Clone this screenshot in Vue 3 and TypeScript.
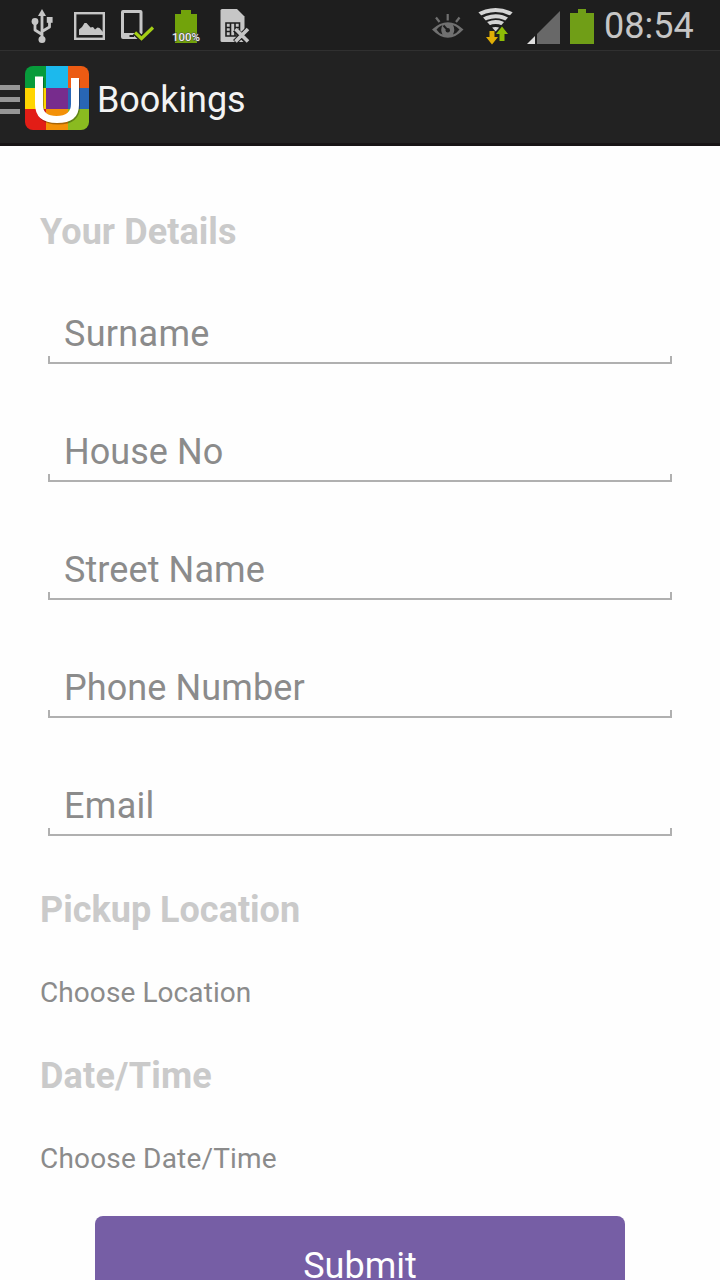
<script setup lang="ts">
interface Field {
  label: string
  spacing: string
}

const fields: Field[] = [
  { label: 'Surname', spacing: '0.3px' },
  { label: 'House No', spacing: '0.05px' },
  { label: 'Street Name', spacing: '0.1px' },
  { label: 'Phone Number', spacing: '0.1px' },
  { label: 'Email', spacing: '0.3px' },
]
</script>

<template>
  <div class="screen">
    <header class="status">
      <svg width="64" height="50" viewBox="0 0 64 50">
        <g fill="none" stroke="#c6c6c6" stroke-width="2.800" stroke-linejoin="round">
          <path d="M42 14V40M42 34.500L35 30V22M42 31.500L49.500 27V20" />
        </g>
        <g fill="#c6c6c6">
          <path d="M42 9l4 7h-8z" />
          <circle cx="35" cy="21.500" r="3.400" />
          <rect x="46.800" y="17" width="5.800" height="5.800" />
          <circle cx="42" cy="39.500" r="3.500" />
        </g>
      </svg>
      <svg width="48" height="50" viewBox="64 0 48 50">
        <rect x="75.200" y="13.200" width="28.600" height="25.600" fill="none" stroke="#c6c6c6" stroke-width="2.400" />
        <path d="M79 35V29.500L82 27l2.500-4h2l4 4.500 2.500-.5 2 2.500 2.500-2 2 .5 3.500 4v3z" fill="#c6c6c6" />
      </svg>
      <svg width="52" height="50" viewBox="112 0 52 50">
        <path fill="#c6c6c6" fill-rule="evenodd" d="M123 10H140.500Q142.500 10 142.500 12V39H123Q121 39 121 37V12Q121 10 123 10ZM124 13V33H139.500V13ZM129.500 35V37H134V35Z" />
        <path d="M135 32.500L141.500 38.500L153 27" fill="none" stroke="#1e1e1e" stroke-width="6" />
        <path d="M135 32.500L141.500 38.500L153 27.500" fill="none" stroke="#a4cf15" stroke-width="3.200" />
      </svg>
      <svg width="48" height="50" viewBox="164 0 48 50">
        <path d="M175 14h6v-4h10v4h6v29h-22z" fill="#72a30b" />
        <text x="172" y="41" class="percent" textLength="28" lengthAdjust="spacingAndGlyphs">100%</text>
      </svg>
      <svg width="48" height="50" viewBox="212 0 48 50">
        <path d="M222 9h15l7.500 7.500V42H222q-1.500 0-1.500-1.500v-30Q220.500 9 222 9z" fill="#c6c6c6" />
        <path d="M226 23h13.500v13H226zM230.500 23v13M235 23v13M226 27.500h4.500M226 31.500h4.500M235 27.500h4.500M235 31.500h4.500" fill="none" stroke="#1e1e1e" stroke-width="1.600" />
        <path d="M235 29.500l12.500 12.500M248 29l-13 13" stroke="#1e1e1e" stroke-width="5.500" />
        <path d="M235.500 29l12.500 12.500M248 29l-12.500 12.500" stroke="#c6c6c6" stroke-width="3.600" />
      </svg>
      <svg class="right" width="48" height="50" viewBox="424 0 48 50">
        <path fill="#707070" fill-rule="evenodd" d="M432 29.500Q448 15 463.500 29.500Q448 46 432 29.500ZM436.500 29.500Q438.500 33 442.500 34.500Q440 29.500 442.500 25Q438.500 26.500 436.500 29.500ZM459.500 29.500Q457 26.500 453 25Q455.500 29.500 453 34.500Q457 33 459.500 29.500Z" />
        <path d="M447.500 30l-4-4.500" stroke="#1e1e1e" stroke-width="2" />
        <circle cx="447.800" cy="30.300" r="2.200" fill="#1e1e1e" />
        <path d="M447.700 14v6.500M436 17.500l3.500 4.500M459.500 17.500l-3.500 4.500" stroke="#707070" stroke-width="2.200" />
      </svg>
      <svg width="48" height="50" viewBox="472 0 48 50">
        <defs>
          <clipPath id="fan"><path d="M475 8.500V5h41v3.500L495.700 31.500z" /></clipPath>
        </defs>
        <g fill="none" stroke="#d4d4d4" stroke-width="4" clip-path="url(#fan)">
          <path d="M475 16.500Q495.700 3.500 516 16.500" />
          <path d="M478 23Q495.700 9.500 513 23" />
          <path d="M481 28.500Q495.700 15.500 510 28.500" />
          <path d="M485 33Q495.700 21 506 33L495.700 33z" fill="#d4d4d4" stroke="none" />
        </g>
        <path d="M489.500 31h5v6h3.500l-6 7.500-6-7.500h3.500z" fill="#e0ae06" />
        <path d="M499.500 41h5v-7h3.500l-6-7.500-6 7.500h3.500z" fill="#8ebd06" />
      </svg>
      <svg width="44" height="50" viewBox="520 0 44 50">
        <path d="M560 11v33h-23V34z" fill="#686868" />
        <path d="M535 36v8h-8z" fill="#dedede" />
      </svg>
      <svg width="36" height="50" viewBox="564 0 36 50">
        <path d="M570 13h8V9h8v4h8v31h-24z" fill="#709e17" />
      </svg>
      <time class="clock">08:54</time>
    </header>

    <nav class="bar">
      <div class="drawer"><i></i><i></i><i></i></div>
      <svg class="logo" width="64" height="64" viewBox="0 0 64 64">
        <defs>
          <clipPath id="tile"><rect width="64" height="64" rx="8" /></clipPath>
        </defs>
        <g clip-path="url(#tile)">
          <rect width="22" height="22" fill="#079b3b" />
          <rect x="21" width="22" height="22" fill="#1cb9ed" />
          <rect x="43" width="21" height="22" fill="#ec5b13" />
          <rect y="22" width="22" height="21" fill="#ffd500" />
          <rect x="21" y="22" width="22" height="21" fill="#772c8d" />
          <rect x="43" y="22" width="21" height="21" fill="#2866b5" />
          <rect y="43" width="22" height="21" fill="#e21d16" />
          <rect x="21" y="43" width="22" height="21" fill="#f39108" />
          <rect x="43" y="43" width="21" height="21" fill="#8abb20" />
          <path class="shade" d="M10 10.500h8V39Q18 50 31.500 50Q46 50 46 38V12h8V39Q54 57 32 57Q10 57 10 38z" />
          <path d="M10 10.500h8V39Q18 50 31.500 50Q46 50 46 38V12h8V39Q54 57 32 57Q10 57 10 38z" fill="#fff" />
        </g>
      </svg>
      <h1>Bookings</h1>
    </nav>

    <main class="form">
      <h2 class="details">Your Details</h2>
      <div class="fields">
        <label v-for="field in fields" :key="field.label" class="field" :style="{ letterSpacing: field.spacing }">
          <span>{{ field.label }}</span>
        </label>
      </div>
      <h2>Pickup Location</h2>
      <p class="location">Choose Location</p>
      <h2 class="date">Date/Time</h2>
      <p class="when">Choose Date/Time</p>
      <button type="button" class="submit">Submit</button>
    </main>
  </div>
</template>

<style>
html,
body {
  margin: 0;
  background: #fefefe;
  overflow: hidden;
}
</style>

<style scoped>
.screen {
  width: 720px;
  height: 1280px;
  overflow: hidden;
  background: #fefefe;
  font-family: Roboto, "Liberation Sans", sans-serif;
}
.status {
  display: flex;
  height: 50px;
  background: #1e1e1e;
}
.status svg {
  flex: none;
}
.status .right {
  margin-left: 164px;
}
.percent {
  fill: #f0f0f0;
  stroke: #444;
  stroke-width: 1px;
  paint-order: stroke;
  font-size: 10.5px;
  font-weight: 500;
}
.clock {
  margin-left: 4px;
  font-size: 36px;
  line-height: 52px;
  color: #c6c6c6;
}
.bar {
  display: flex;
  align-items: center;
  height: 96px;
  box-sizing: border-box;
  border-top: 1px solid #303030;
  border-bottom: 3px solid #171415;
  background: #222;
}
.drawer {
  display: flex;
  flex-direction: column;
  gap: 7px;
  width: 20px;
  margin-top: 4px;
}
.drawer i {
  height: 5px;
  background: #969696;
}
.logo {
  margin: 2px 8px 0 5px;
}
.shade {
  fill: #000;
  fill-opacity: 0.3;
  transform: translate(1px, 1.5px);
}
h1 {
  margin: 5px 0 0;
  font-size: 36px;
  line-height: 42px;
  font-weight: 400;
  letter-spacing: -0.08px;
  color: #f3f3f3;
}
.form {
  display: flex;
  flex-direction: column;
  padding: 65px 40px 0;
}
h2 {
  margin: 0;
  font-size: 36px;
  line-height: 42px;
  font-weight: 700;
  color: #cacaca;
}
.details {
  letter-spacing: 0.08px;
}
.date {
  letter-spacing: 0.2px;
}
.fields {
  display: flex;
  flex-direction: column;
  gap: 66px;
  margin: 60px 8px 52px;
}
.field {
  display: block;
  height: 51px;
  margin-bottom: 1px;
  box-sizing: border-box;
  padding-left: 16px;
  font-size: 36px;
  line-height: 42px;
  color: #8b8b8b;
  border-bottom: 2px solid #b0b0b0;
  background:
    linear-gradient(#b0b0b0, #b0b0b0) left bottom / 2px 6px no-repeat,
    linear-gradient(#b0b0b0, #b0b0b0) right bottom / 2px 6px no-repeat;
}
p {
  margin: 45px 0;
  font-size: 28px;
  line-height: 34px;
  color: #8b8b8b;
}
.location {
  letter-spacing: 0.08px;
}
.when {
  margin-bottom: 40px;
  letter-spacing: 0.18px;
}
.submit {
  align-self: center;
  width: 530px;
  height: 100px;
  padding: 0;
  border: 0;
  border-radius: 8px;
  background: #765ea5;
  color: #fff;
  font: 36px/100px Roboto, "Liberation Sans", sans-serif;
}
</style>
